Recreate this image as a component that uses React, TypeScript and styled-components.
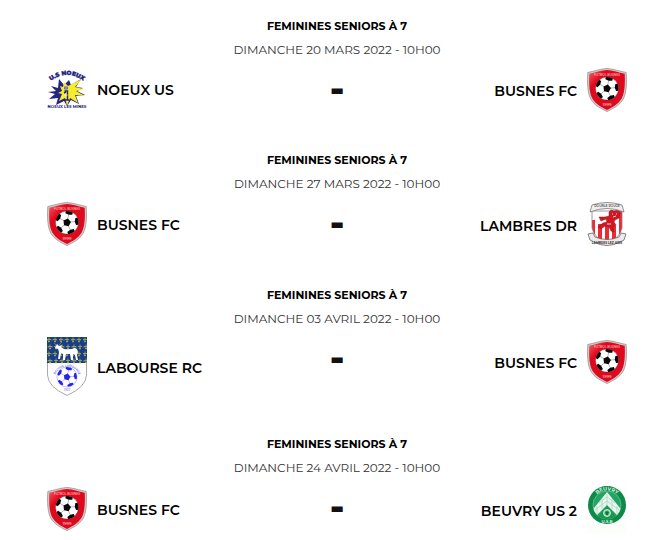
import React, { useId } from "react";
import styled, { createGlobalStyle } from "styled-components";

const GlobalStyle = createGlobalStyle`
  * { box-sizing: border-box; }
  body {
    margin: 0;
    background: #fff;
    color: #111;
    font-family: Montserrat, Inter, "Liberation Sans", sans-serif;
  }
`;

const Agenda = styled.main`
  display: flex;
  flex-direction: column;
  gap: 36px;
  padding: 14px 18px 0 47px;
`;

const Match = styled.article`
  display: flex;
  flex-direction: column;
  text-align: center;
`;

const Competition = styled.h2`
  margin: 0;
  font-size: 11px;
  font-weight: 700;
  line-height: 24px;
  color: #000;
`;

const Kickoff = styled.time`
  font-size: 12px;
  font-weight: 400;
  line-height: 24px;
  color: #333;
`;

const Teams = styled.div`
  display: grid;
  grid-template-columns: 1fr auto 1fr;
  margin-top: 6px;
`;

/* Spare height is shared so a shorter crest stays near the top of the row. */
const Side = styled.div<{ $away?: boolean }>`
  display: grid;
  grid-template-rows: 1fr auto 4fr;
  justify-content: ${(p) => (p.$away ? "end" : "start")};
`;

const Team = styled.div<{ $away?: boolean }>`
  grid-row: 2;
  display: flex;
  flex-direction: ${(p) => (p.$away ? "row-reverse" : "row")};
  align-items: center;
  gap: 10px;
`;

const TeamName = styled.span`
  padding-top: 2px;
  font-size: 14px;
  font-weight: 600;
  line-height: 20px;
  white-space: nowrap;
  color: #000;
`;

const Score = styled.span`
  font-size: 38px;
  font-weight: 800;
  line-height: 42px;
  height: 44px;
`;

const Crest = styled.svg`
  display: block;
  width: 40px;
  flex: none;
`;

function Ball({ cx, cy, r, ink }: { cx: number; cy: number; r: number; ink: string }) {
  const id = useId();
  const point = (i: number, d: number, turn = 0) => {
    const a = ((i * 72 - 90 + turn) * Math.PI) / 180;
    return `${cx + Math.cos(a) * d * r},${cy + Math.sin(a) * d * r}`;
  };
  return (
    <g>
      <clipPath id={id}><circle cx={cx} cy={cy} r={r} /></clipPath>
      <circle cx={cx} cy={cy} r={r} fill="#fff" />
      <g clipPath={`url(#${id})`} fill={ink}>
        <polygon points={[0, 1, 2, 3, 4].map((i) => point(i, 0.35, 12)).join(" ")} />
        {[0, 1, 2, 3, 4].map((i) => (
          <g key={i}>
            <polygon
              points={[point(i, 0.68, 12), point(i, 0.82, 34), point(i, 1.15, 28), point(i, 1.15, -4), point(i, 0.82, -10)].join(" ")}
            />
            <path d={`M${point(i, 0.3, 12)} L${point(i, 0.7, 12)}`} stroke={ink} strokeWidth={0.3} />
          </g>
        ))}
      </g>
      <circle cx={cx} cy={cy} r={r} fill="none" stroke={ink} strokeWidth={0.3} />
    </g>
  );
}

function BusnesCrest() {
  const id = useId();
  return (
    <Crest viewBox="0 0 40 44" role="img" aria-label="Busnes FC">
      <defs>
        <linearGradient id={id} x1="0" y1="0" x2="1" y2="1">
          <stop offset="0" stopColor="#f0626a" />
          <stop offset="0.25" stopColor="#e2081b" />
          <stop offset="1" stopColor="#dc0a20" />
        </linearGradient>
      </defs>
      <path d="M20 .5C14 .8 8 3 .8 4.5.2 14 .3 25 4 31.500 8 38 14 40.500 20 43.500 26 40.500 32 38 36 31.500 39.700 25 39.800 14 39.200 4.500 32 3 26 .8 20 .5Z" fill="#d3cccc" stroke="#8f8989" strokeWidth=".7" />
      <path d="M20 2C14 2.300 8 4.500 2.300 5.700 1.800 14 2 24.500 5.300 30.500 9 36.500 14.500 39 20 42 25.500 39 31 36.500 34.700 30.500 38 24.500 38.200 14 37.700 5.700 32 4.500 26 2.300 20 2Z" fill={`url(#${id})`} />
      <text x="20" y="8" textAnchor="middle" fontSize="3" fontWeight="500" fill="#ffc4c8">FUTBOL BUSNES</text>
      <Ball cx={20} cy={20.5} r={11.5} ink="#090909" />
      <text x="20" y="37.500" textAnchor="middle" fontSize="4" fontWeight="500" fill="#ffd5d8">1999</text>
    </Crest>
  );
}

function NoeuxCrest() {
  const id = useId();
  return (
    <Crest viewBox="0 0 40 42" role="img" aria-label="Noeux US">
      <path id={id} d="M1 15Q20 -1 39 15" fill="none" />
      <text fontSize="6" fontWeight="900" fill="#252384" stroke="#252384" strokeWidth=".3" textAnchor="middle">
        <textPath href={`#${id}`} startOffset="50%">U.S NOEUX</textPath>
      </text>
      <path d="M4 18 11 20 12 11 17 17 22 12 24 17 34 11 29 19 36 20 30 23 38 27 29 28 32 36 24 32 20 38 17 33 9 37 11 30 2 31 8 26 1 24 9 23Z" fill="#252384" />
      <path d="M13 18 16 19 17 14 21 18 35 11 28 19 37 21 29 23 38 28 28 27 31 35 23 30 20 38 18 30 12 33 15 26 11 25 15 23Z" fill="#f4ec2d" />
      <circle cx="19" cy="20" r="2" fill="#5462a6" />
      <path d="M17.500 23H20.500V32H22M17 25 19 24M17.500 32H22" fill="none" stroke="#252384" strokeWidth="1.400" />
      <path d="M17 27H21M19 18V22" stroke="#fff" strokeWidth=".6" />
      <text x="20" y="40" textAnchor="middle" fontSize="4" fontWeight="700" fill="#252384">NOEUX LES MINES</text>
    </Crest>
  );
}

function LambresCrest() {
  const id = useId();
  return (
    <Crest viewBox="0 0 40 45" role="img" aria-label="Lambres DR">
      <clipPath id={id}><path d="M5 9H35V26Q33 36 20 41 7 36 5 26Z" /></clipPath>
      <g clipPath={`url(#${id})`}>
        <path d="M4 8H36V42H4Z" fill="#fff" />
        <path d="M4 18H8V42H4ZM11 22H15V42H11ZM18 24H22V42H18ZM25 24H29V42H25ZM32 8H36V42H32Z" fill="#ee2a32" />
      </g>
      <path d="M5 9H35V26Q33 36 20 41 7 36 5 26Z" fill="none" stroke="#8a8080" strokeWidth=".8" />
      <path d="M22 10 24 8 27 9 31 8 33 11 32 16 28 18 27 20 29 23 26 26 27 30 24 29 22 25 18 24 14 27 11 25 16 21 20 20 19 17 14 19 12 15 18 15 22 14Z" fill="#cf1824" stroke="#8b151a" strokeWidth=".5" />
      <path d="M25 12H26M29 12H30M26 15 29 14M20 22H24" stroke="#fff" strokeWidth=".8" />
      <path d="M5 3Q20-2 35 3L37 10Q20 3 3 10Z" fill="#f2eeee" stroke="#777" strokeWidth=".8" />
      <text x="20" y="5" textAnchor="middle" fontSize="3" fontWeight="600" fill="#555">DOUBLE ROUGE</text>
      <path d="M1 32 6 31 8 35Q20 40 32 35L34 31 39 32 37 38 33 40Q20 47 7 40L3 38Z" fill="#eeeaea" stroke="#666" strokeWidth=".8" />
      <text x="20" y="41.500" textAnchor="middle" fontSize="3" fontWeight="700" fill="#333">LAMBRES LEZ AIRE</text>
    </Crest>
  );
}

function LabourseCrest() {
  const id = useId();
  return (
    <Crest viewBox="0 0 40 59" role="img" aria-label="Labourse RC">
      <path d="M.5 1H39.500V38Q39 50 20 58.500 1 50 .5 38Z" fill="#fff" stroke="#a9a9a9" />
      <path d="M0 0H40V26H0Z" fill="#173e88" />
      {[3, 10, 17, 24].map((y, row) => (
        <g key={y} stroke="#a5a353" strokeWidth=".9">
          {[2, 8, 14, 20, 26, 32, 38].map((x) => (
            <path key={x} d={`M${x + (row % 2)} ${y - 2.5}v5m-2-3h4m-3 2h2`} />
          ))}
          <path d={`M0 ${y}H40`} strokeDasharray="2 2" opacity=".6" />
        </g>
      ))}
      <path d="M10 7 12 9 15 8 14 10 17 12Q23 13 28 11L30 12 31 15 30 18 31 23 29 23 28 18 26 17 26 23 24 23 23 17 19 17 18 23 16 23 16 17 14 16 13 22 11 22 12 15 11 12 8 11Z" fill="#fff" />
      <path d="M9 8 7 6M12 8 15 5" stroke="#b8703b" strokeWidth=".8" />
      <path id={id} d="M7.500 42A12.500 12.500 0 0 1 32.500 42" fill="none" />
      <text fontSize="3" fontWeight="600" fill="#6868f5" textAnchor="middle">
        <textPath href={`#${id}`} startOffset="50%">RACING LABOURSE</textPath>
      </text>
      <Ball cx={20} cy={40} r={10} ink="#2424ee" />
      <text x="20" y="54" textAnchor="middle" fontSize="3" fontWeight="500" fill="#7474ec">1937</text>
    </Crest>
  );
}

function BeuvryCrest() {
  const id = useId();
  return (
    <Crest viewBox="0 0 40 48" role="img" aria-label="Beuvry US">
      <defs>
        <clipPath id={`${id}c`}><circle cx="20" cy="19" r="14" /></clipPath>
        <path id={`${id}t`} d="M5.500 19A14.500 14.500 0 0 1 34.500 19" />
      </defs>
      <path d="M0 0H40V48H0Z" fill="#fcfefc" />
      <circle cx="20" cy="19" r="19" fill="#0d8a48" />
      <circle cx="20" cy="19" r="14" fill="#23a364" stroke="#76c79b" strokeWidth=".7" />
      <g clipPath={`url(#${id}c)`}>
        <path d="M20 6 37 27 31 30 20 19 9 30 3 27Z" fill="#e9f6ed" />
        <path d="M20 8V19M15 13V23M25 13V23M10 20V28M30 20V28M12 17 20 11 28 17M8 24 20 15 32 24" stroke="#9bcfae" strokeWidth=".6" fill="none" />
        <path d="M20 20 29 30 24 34H15L11 30Z" fill="#16994f" />
      </g>
      <circle cx="20" cy="27" r="3.500" fill="#7bc397" stroke="#e7f8ed" strokeWidth=".8" />
      <path d="M18 26 20 25 22 26 21 29H19Z" fill="#087b3c" />
      <text fontSize="5" fontWeight="700" fill="#d8f1e0" textAnchor="middle">
        <textPath href={`#${id}t`} startOffset="50%">BEUVRY</textPath>
      </text>
      <text x="20" y="36.500" textAnchor="middle" fontSize="4" fontWeight="700" fill="#d8f1e0">U.S.B</text>
    </Crest>
  );
}

const clubs = {
  noeux: { name: "NOEUX US", Logo: NoeuxCrest },
  busnes: { name: "BUSNES FC", Logo: BusnesCrest },
  lambres: { name: "LAMBRES DR", Logo: LambresCrest },
  labourse: { name: "LABOURSE RC", Logo: LabourseCrest },
  beuvry: { name: "BEUVRY US 2", Logo: BeuvryCrest },
};

type Club = keyof typeof clubs;

const matches: { iso: string; date: string; home: Club; away: Club }[] = [
  { iso: "2022-03-20T10:00", date: "DIMANCHE 20 MARS 2022 - 10H00", home: "noeux", away: "busnes" },
  { iso: "2022-03-27T10:00", date: "DIMANCHE 27 MARS 2022 - 10H00", home: "busnes", away: "lambres" },
  { iso: "2022-04-03T10:00", date: "DIMANCHE 03 AVRIL 2022 - 10H00", home: "labourse", away: "busnes" },
  { iso: "2022-04-24T10:00", date: "DIMANCHE 24 AVRIL 2022 - 10H00", home: "busnes", away: "beuvry" },
];

function TeamSide({ club, away }: { club: Club; away?: boolean }) {
  const { name, Logo } = clubs[club];
  return (
    <Side $away={away}>
      <Team $away={away}>
        <Logo />
        <TeamName>{name}</TeamName>
      </Team>
    </Side>
  );
}

export default function App() {
  return (
    <>
      <GlobalStyle />
      <Agenda>
        {matches.map((m) => (
          <Match key={m.iso}>
            <Competition>FEMININES SENIORS À 7</Competition>
            <Kickoff dateTime={m.iso}>{m.date}</Kickoff>
            <Teams>
              <TeamSide club={m.home} />
              <Score>-</Score>
              <TeamSide club={m.away} away />
            </Teams>
          </Match>
        ))}
      </Agenda>
    </>
  );
}
